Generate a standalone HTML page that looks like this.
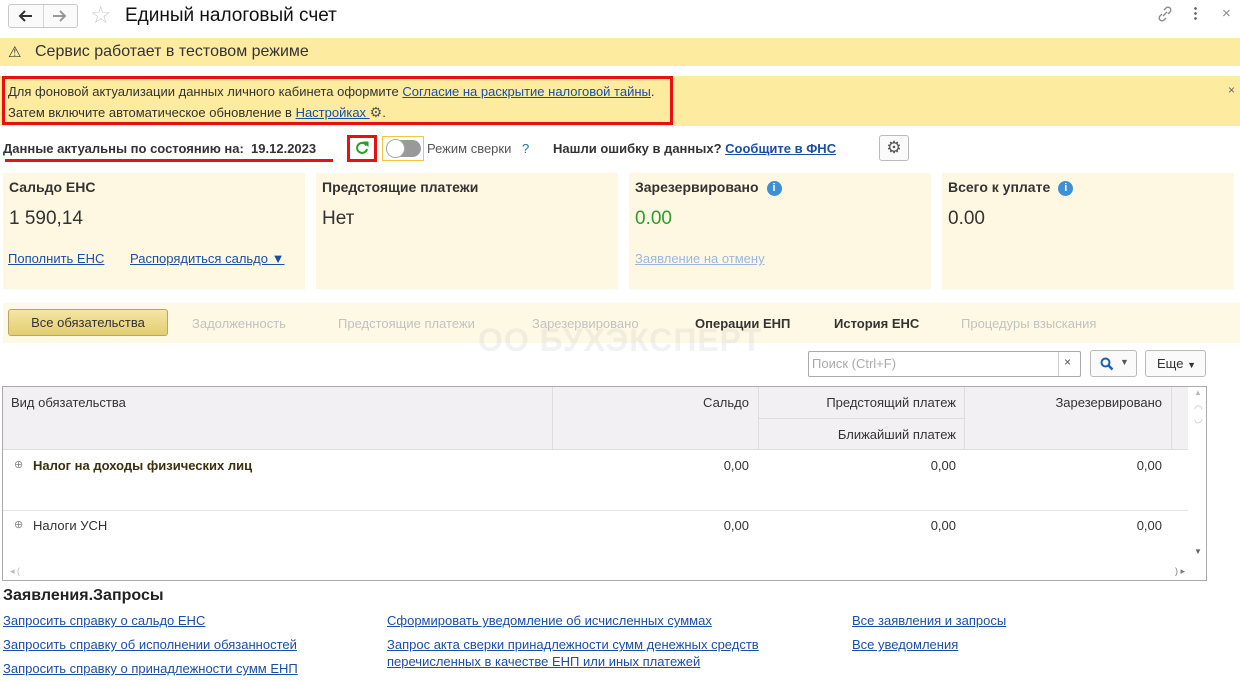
<!DOCTYPE html>
<html><head><meta charset="utf-8"><style>
*{box-sizing:border-box;margin:0;padding:0}
body{width:1240px;height:681px;background:#fff;font-family:"Liberation Sans",Arial,sans-serif;font-size:13px;color:#333;position:relative;overflow:hidden}
.a{position:absolute;white-space:nowrap}
a,.lnk{color:#1a4fa8;text-decoration:underline}
.card{position:absolute;top:173px;height:116px;background:#fef8e3}
.card .t{position:absolute;left:6px;top:6px;font-weight:bold;font-size:14px;color:#333}
.card .v{position:absolute;left:6px;top:35px;font-size:19px;color:#333}
.info{display:inline-block;width:15px;height:15px;border-radius:50%;background:#3d8fd6;color:#fff;font-size:11px;text-align:center;line-height:15px;font-weight:bold;margin-left:8px;vertical-align:1px}
.tab{position:absolute;top:316px;font-size:13px;color:#c2c2c2}
.num{position:absolute;font-size:13px;color:#333}
</style></head><body>
<!-- top bar -->
<div class="a" style="left:8px;top:4px;width:70px;height:24px;border:1px solid #c8c8c8;border-radius:3px;background:#fafafa"></div>
<div class="a" style="left:43px;top:5px;width:1px;height:22px;background:#d4d4d4"></div>
<svg class="a" style="left:17px;top:9px" width="16" height="14" viewBox="0 0 16 14"><path d="M15 7H3M8 2L3 7l5 5" fill="none" stroke="#333" stroke-width="2"/></svg>
<svg class="a" style="left:52px;top:9px" width="16" height="14" viewBox="0 0 16 14"><path d="M1 7h12M8 2l5 5-5 5" fill="none" stroke="#999" stroke-width="2"/></svg>
<div class="a" style="left:90px;top:1px;font-size:24px;color:#ccc">☆</div>
<div class="a" style="left:125px;top:5px;font-size:19px;color:#111">Единый налоговый счет</div>
<svg class="a" style="left:1157px;top:6px" width="16" height="16" viewBox="0 0 16 16"><g fill="none" stroke="#888" stroke-width="1.3"><path d="M7 4l2-2a2.8 2.8 0 014 4l-2 2"/><path d="M9 12l-2 2a2.8 2.8 0 01-4-4l2-2"/><path d="M6 10l4-4"/></g></svg>
<div class="a" style="left:1194px;top:6px;width:3px;height:14px;background:radial-gradient(circle,#666 1.2px,transparent 1.5px) 0 0/3px 5px"></div>
<div class="a" style="left:1222px;top:5px;font-size:15px;color:#888">×</div>
<!-- bar 1 -->
<div class="a" style="left:0;top:38px;width:1240px;height:28px;background:#fdeba0"></div>
<div class="a" style="left:8px;top:43px;font-size:15px">⚠</div>
<div class="a" style="left:35px;top:43px;font-size:16px;color:#333">Сервис работает в тестовом режиме</div>
<!-- bar 2 -->
<div class="a" style="left:0;top:76px;width:1240px;height:50px;background:#fdeba0"></div>
<div class="a" style="left:2px;top:76px;width:671px;height:49px;border:3px solid #e81010"></div>
<div class="a" style="left:8px;top:84px;font-size:13px;color:#333">Для фоновой актуализации данных личного кабинета оформите <span class="lnk">Согласие на раскрытие налоговой тайны</span>.</div>
<div class="a" style="left:8px;top:104px;font-size:13px;color:#333">Затем включите автоматическое обновление в <span class="lnk">Настройках </span><span style="font-size:14px;color:#555">⚙</span>.</div>
<div class="a" style="left:1228px;top:83px;font-size:12px;color:#666">×</div>
<!-- status row -->
<div class="a" style="left:3px;top:141px;font-weight:bold;font-size:13px;color:#333">Данные актуальны по состоянию на:&nbsp;&nbsp;19.12.2023</div>
<div class="a" style="left:5px;top:159px;width:328px;height:3px;background:#e81010"></div>
<div class="a" style="left:347px;top:135px;width:30px;height:27px;border:3px solid #e81010;background:#fff"></div>
<svg class="a" style="left:355px;top:141px" width="14" height="14" viewBox="0 0 14 14"><path d="M11.5 4.5A5 5 0 1 0 12 8" fill="none" stroke="#2a9d2a" stroke-width="2"/><path d="M9 1h4v4z" fill="#2a9d2a" stroke="#2a9d2a"/></svg>
<div class="a" style="left:382px;top:136px;width:42px;height:25px;border:1px solid #f5c53b"></div>
<div class="a" style="left:386px;top:140px;width:35px;height:17px;border-radius:9px;background:#999"></div>
<div class="a" style="left:386px;top:139px;width:19px;height:19px;border-radius:50%;background:#fff;border:1px solid #aaa"></div>
<div class="a" style="left:427px;top:141px;color:#555">Режим сверки</div>
<div class="a" style="left:522px;top:141px;color:#1a6fc8">?</div>
<div class="a" style="left:553px;top:141px;font-weight:bold;color:#333">Нашли ошибку в данных? <a style="font-weight:bold">Сообщите в ФНС</a></div>
<div class="a" style="left:879px;top:135px;width:30px;height:26px;border:1px solid #bbb;border-radius:3px;background:#fafafa;font-size:17px;color:#555;text-align:center;line-height:23px">⚙</div>
<!-- cards -->
<div class="card" style="left:3px;width:302px"><div class="t">Сальдо ЕНС</div><div class="v">1 590,14</div>
<div class="a lnk" style="left:5px;top:78px">Пополнить ЕНС</div><div class="a lnk" style="left:127px;top:78px">Распорядиться сальдо ▼</div></div>
<div class="card" style="left:316px;width:302px"><div class="t">Предстоящие платежи</div><div class="v">Нет</div></div>
<div class="card" style="left:629px;width:302px"><div class="t">Зарезервировано<span class="info">i</span></div><div class="v" style="color:#2a9d2a">0.00</div>
<div class="a" style="left:6px;top:78px;color:#9bb7df;text-decoration:underline">Заявление на отмену</div></div>
<div class="card" style="left:942px;width:292px"><div class="t">Всего к уплате<span class="info">i</span></div><div class="v">0.00</div></div>
<!-- tabs -->
<div class="a" style="left:3px;top:303px;width:1237px;height:40px;background:#fef9e5"></div>
<div class="a" style="left:478px;top:322px;font-size:32px;font-weight:bold;color:rgba(190,190,190,.2);letter-spacing:1px">ОО БУХЭКСПЕРТ</div>
<div class="a" style="left:8px;top:309px;width:160px;height:27px;border:1px solid #b8a56a;border-radius:3px;background:linear-gradient(#f5e6a3,#e3cd72);text-align:center;line-height:25px;font-size:13px;color:#333">Все обязательства</div>
<div class="tab" style="left:192px">Задолженность</div>
<div class="tab" style="left:338px">Предстоящие платежи</div>
<div class="tab" style="left:532px">Зарезервировано</div>
<div class="tab" style="left:695px;color:#333;font-weight:bold">Операции ЕНП</div>
<div class="tab" style="left:834px;color:#333;font-weight:bold">История ЕНС</div>
<div class="tab" style="left:961px">Процедуры взыскания</div>
<!-- search -->
<div class="a" style="left:808px;top:351px;width:273px;height:26px;border:1px solid #aaa;border-radius:2px;background:#fff"></div>
<div class="a" style="left:1058px;top:352px;width:1px;height:24px;background:#ccc"></div>
<div class="a" style="left:812px;top:356px;color:#aaa">Поиск (Ctrl+F)</div>
<div class="a" style="left:1064px;top:355px;color:#555;font-size:12px">×</div>
<div class="a" style="left:1090px;top:350px;width:47px;height:27px;border:1px solid #bbb;border-radius:3px;background:#fafafa"></div>
<svg class="a" style="left:1100px;top:357px" width="14" height="14" viewBox="0 0 14 14"><circle cx="5.5" cy="5.5" r="4" fill="none" stroke="#1a5fb4" stroke-width="2"/><path d="M8.5 8.5l4 4" stroke="#1a5fb4" stroke-width="2.4"/></svg>
<div class="a" style="left:1120px;top:357px;color:#555;font-size:9px">▼</div>
<div class="a" style="left:1145px;top:350px;width:61px;height:27px;border:1px solid #bbb;border-radius:3px;background:#fafafa;color:#333;line-height:25px;padding-left:11px">Еще <span style="font-size:9px">▼</span></div>
<!-- table -->
<div class="a" style="left:2px;top:386px;width:1205px;height:195px;border:1px solid #aaa;background:#fff"></div>
<div class="a" style="left:3px;top:387px;width:1185px;height:63px;background:#f3f0f4;border-bottom:1px solid #ddd"></div>
<div class="a" style="left:552px;top:387px;width:1px;height:63px;background:#ddd"></div>
<div class="a" style="left:758px;top:387px;width:1px;height:63px;background:#ddd"></div>
<div class="a" style="left:964px;top:387px;width:1px;height:63px;background:#ddd"></div>
<div class="a" style="left:1171px;top:387px;width:1px;height:63px;background:#ddd"></div>
<div class="a" style="left:759px;top:418px;width:205px;height:1px;background:#ddd"></div>
<div class="a" style="left:11px;top:395px;color:#333">Вид обязательства</div>
<div class="a" style="right:491px;top:395px;color:#333">Сальдо</div>
<div class="a" style="right:284px;top:395px;color:#333">Предстоящий платеж</div>
<div class="a" style="right:284px;top:427px;color:#333">Ближайший платеж</div>
<div class="a" style="right:78px;top:395px;color:#333">Зарезервировано</div>
<div class="a" style="left:3px;top:510px;width:1185px;height:1px;background:#e3e3e3"></div>
<div class="a" style="left:14px;top:458px;color:#888;font-size:11px">⊕</div>
<div class="a" style="left:33px;top:458px;font-weight:bold;color:#3a3010">Налог на доходы физических лиц</div>
<div class="a" style="left:14px;top:518px;color:#888;font-size:11px">⊕</div>
<div class="a" style="left:33px;top:518px;color:#333">Налоги УСН</div>
<div class="num" style="right:491px;top:458px">0,00</div><div class="num" style="right:284px;top:458px">0,00</div><div class="num" style="right:78px;top:458px">0,00</div>
<div class="num" style="right:491px;top:518px">0,00</div><div class="num" style="right:284px;top:518px">0,00</div><div class="num" style="right:78px;top:518px">0,00</div>
<div class="a" style="left:1194px;top:388px;color:#bbb;font-size:8px">▲</div>
<div class="a" style="left:1194px;top:405px;color:#bbb;font-size:10px;line-height:10px">◠<br>◡</div>
<div class="a" style="left:1194px;top:547px;color:#666;font-size:8px">▼</div>
<div class="a" style="left:10px;top:566px;color:#bbb;font-size:9px">◂ (</div>
<div class="a" style="left:1175px;top:566px;color:#777;font-size:9px">) ▸</div>
<!-- bottom -->
<div class="a" style="left:3px;top:587px;font-weight:bold;font-size:16px;color:#222">Заявления.Запросы</div>
<div class="a lnk" style="left:3px;top:613px">Запросить справку о сальдо ЕНС</div>
<div class="a lnk" style="left:3px;top:637px">Запросить справку об исполнении обязанностей</div>
<div class="a lnk" style="left:3px;top:661px">Запросить справку о принадлежности сумм ЕНП</div>
<div class="a lnk" style="left:387px;top:613px">Сформировать уведомление об исчисленных суммах</div>
<div class="a lnk" style="left:387px;top:637px">Запрос акта сверки принадлежности сумм денежных средств</div>
<div class="a lnk" style="left:387px;top:654px">перечисленных в качестве ЕНП или иных платежей</div>
<div class="a lnk" style="left:852px;top:613px">Все заявления и запросы</div>
<div class="a lnk" style="left:852px;top:637px">Все уведомления</div>
</body></html>
